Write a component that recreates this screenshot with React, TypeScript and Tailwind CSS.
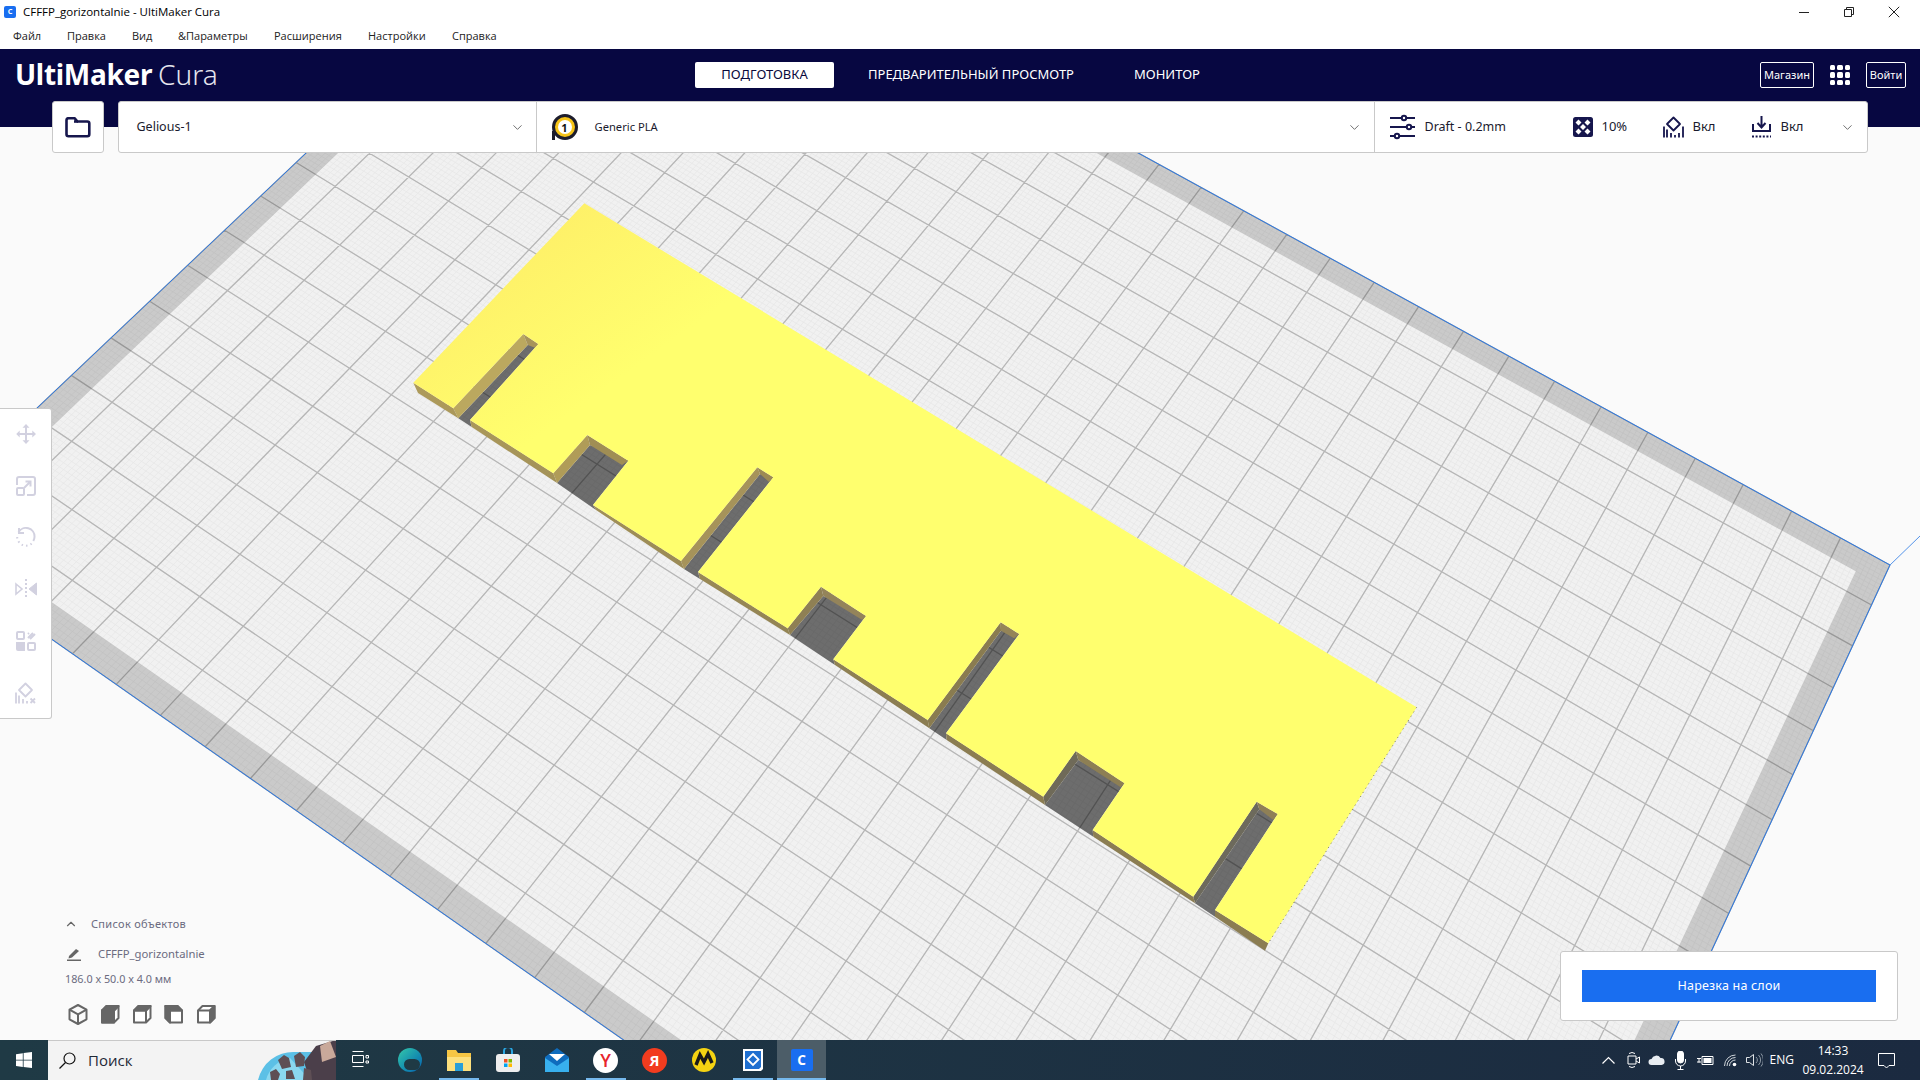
import type { ReactNode } from 'react'
import { ChevronDown, ChevronUp } from 'lucide-react'

const MENU = ['Файл', 'Правка', 'Вид', '&Параметры', 'Расширения', 'Настройки', 'Справка']
const MENU_GAPS = ['w-[54px]', 'w-[65px]', 'w-[46px]', 'w-[96px]', 'w-[94px]', 'w-[84px]', 'w-[60px]']

// build plate: homography from plate mm to screen px
const PLATE_W = 300
const PLATE_D = 200

function project(x: number, y: number): [number, number] {
  const u = x / PLATE_W
  const v = y / PLATE_D
  const w = 1 - 0.1434 * u - 0.1987 * v
  return [(1008 * u - 688.7 * v + 611) / w, (620 * u + 564.7 * v - 136) / w]
}

function pt(x: number, y: number) {
  const [a, b] = project(x, y)
  return `${a.toFixed(1)} ${b.toFixed(1)}`
}

function gridPath(step: number) {
  let d = ''
  for (let x = 0; x <= PLATE_W; x += step) d += `M${pt(x, 0)}L${pt(x, PLATE_D)}`
  for (let y = 0; y <= PLATE_D; y += step) d += `M${pt(0, y)}L${pt(PLATE_W, y)}`
  return d
}

const outline = `M${pt(0, 0)}L${pt(PLATE_W, 0)}L${pt(PLATE_W, PLATE_D)}L${pt(0, PLATE_D)}Z`
const inner = `M${pt(5, 5)}L${pt(PLATE_W - 5, 5)}L${pt(PLATE_W - 5, PLATE_D - 5)}L${pt(5, PLATE_D - 5)}Z`

type P = [number, number]
interface Notch {
  bl: P
  top: P
  right: P
  br: P
  innerTop: P
  innerRight: P
  floorBl: P
  baseBr: P
  left: string
  far: string
}

const NOTCHES: Notch[] = [
  { bl: [453.3, 408.3], top: [523.3, 334], right: [538.3, 344], br: [470, 420], innerTop: [527.7, 345], innerRight: [535, 347.7], floorBl: [458.3, 418.3], baseBr: [471.7, 427], left: '#bba85f', far: '#a8945a' },
  { bl: [553.3, 473.3], top: [587.3, 435], right: [628.3, 460.7], br: [593, 505], innerTop: [590, 445], innerRight: [622, 465], floorBl: [557, 483], baseBr: [596, 510], left: '#b09c58', far: '#a08e54' },
  { bl: [681, 561], top: [757.3, 467.3], right: [773.3, 477.3], br: [698, 572], innerTop: [760, 474], innerRight: [769, 482], floorBl: [684, 569], baseBr: [700, 579], left: '#a6935a', far: '#9c8b54' },
  { bl: [787.7, 628.3], top: [821, 586.7], right: [866, 616], br: [833.3, 659.3], innerTop: [823.3, 596], innerRight: [862.3, 620], floorBl: [790, 635], baseBr: [835, 665], left: '#8f8054', far: '#94845a' },
  { bl: [927.7, 720], top: [1000.7, 622.3], right: [1019.3, 634], br: [946, 733.3], innerTop: [1001, 630.7], innerRight: [1014, 638.3], floorBl: [929.3, 728.3], baseBr: [946.7, 740], left: '#8a7c50', far: '#958558' },
  { bl: [1043.3, 796.7], top: [1075.7, 751], right: [1124.5, 783.3], br: [1092.7, 830], innerTop: [1078.3, 760], innerRight: [1120.7, 787.3], floorBl: [1045, 805], baseBr: [1093.3, 836.7], left: '#6f6a58', far: '#8d7f54' },
  { bl: [1193.3, 896.7], top: [1256.7, 801.7], right: [1277.7, 814], br: [1215, 910], innerTop: [1259.3, 809.3], innerRight: [1273.3, 820], floorBl: [1195, 903.3], baseBr: [1215, 916.7], left: '#6d6a5c', far: '#8f8056' },
]

const poly = (...ps: P[]) => ps.map((p) => p.join(',')).join(' ')

const TOP_FACE = (() => {
  const ps: P[] = [[584.3, 203.3], [1416.7, 707.3], [1268.3, 943.3]]
  for (let i = NOTCHES.length - 1; i >= 0; i--) {
    const n = NOTCHES[i]
    ps.push(n.br, n.right, n.top, n.bl)
  }
  ps.push([413.3, 382.7])
  return poly(...ps)
})()

function sideSegments() {
  const out: string[] = []
  let start: P = [413.3, 382.7]
  let startBase: P = [418, 393]
  NOTCHES.forEach((n) => {
    out.push(poly(start, n.bl, n.floorBl, startBase))
    start = n.br
    startBase = n.baseBr
  })
  out.push(poly(start, [1268.3, 943.3], [1265, 950.7], startBase))
  return out
}

function BuildPlate() {
  const [cx, cy] = project(PLATE_W, 0)
  return (
    <svg className="absolute inset-0 h-full w-full" viewBox="0 127 1920 913" preserveAspectRatio="none">
      <defs>
        <linearGradient id="top-face" gradientUnits="userSpaceOnUse" x1="560" y1="210" x2="660" y2="350">
          <stop offset="0" stopColor="#fef068" />
          <stop offset="1" stopColor="#ffff6e" />
        </linearGradient>
        <linearGradient id="side-face" gradientUnits="userSpaceOnUse" x1="413" y1="383" x2="900" y2="700">
          <stop offset="0" stopColor="#ae9b5b" />
          <stop offset="1" stopColor="#8b7d52" />
        </linearGradient>
      </defs>
      <path d={outline} fill="#f1f1f1" />
      <path d={gridPath(1)} fill="none" stroke="#e7e7e7" strokeWidth="0.8" />
      <path d={gridPath(10)} fill="none" stroke="#b6b6b6" strokeWidth="1.3" />
      <path d={outline + inner} fill="#000" fillOpacity="0.16" fillRule="evenodd" />
      <path d={outline} fill="none" stroke="#2a78e4" strokeWidth="1" />
      <line x1={cx} y1={cy} x2="1920" y2="536" stroke="#2a78e4" strokeWidth="0.8" />

      {NOTCHES.map((n, i) => (
        <polygon key={i} points={poly(n.innerTop, n.right, n.br, n.baseBr, n.floorBl)} fill="#000" fillOpacity="0.55" />
      ))}
      {NOTCHES.map((n, i) => (
        <g key={i}>
          <polygon points={poly(n.bl, n.top, n.innerTop, n.floorBl)} fill={n.left} />
          <polygon points={poly(n.top, n.right, n.innerRight, n.innerTop)} fill={n.far} />
        </g>
      ))}
      {sideSegments().map((s, i) => (
        <polygon key={i} points={s} fill="url(#side-face)" />
      ))}
      <polygon points={TOP_FACE} fill="url(#top-face)" />
      <line x1="1416.7" y1="707.3" x2="1268.3" y2="943.3" stroke="#555" strokeWidth="0.8" strokeDasharray="1 4" />
    </svg>
  )
}

function WindowControls() {
  return (
    <div className="flex items-center text-[#222]">
      <div className="mr-[6px] flex w-[45px] justify-center">
        <div className="h-px w-[10px] bg-[#222]" />
      </div>
      <svg className="mx-[11px] h-[12px] w-[12px]" viewBox="0 0 12 12" fill="none" stroke="#222">
        <path d="M1.5 3.5h7v7h-7zM3.5 3.5v-2h7v7h-2" />
      </svg>
      <svg className="ml-[22px] mr-[20px] h-[12px] w-[12px]" viewBox="0 0 12 12" fill="none" stroke="#222">
        <path d="M.8.8l10.4 10.4M11.2.8L.8 11.2" />
      </svg>
    </div>
  )
}

function CuraMark({ size }: { size: number }) {
  return (
    <div
      className="flex items-center justify-center rounded-[2px] bg-[#196ef0] text-white"
      style={{ width: size, height: size, fontSize: size * 0.62 }}
    >
      <span className="font-bold leading-none">C</span>
    </div>
  )
}

function FolderIcon() {
  return (
    <svg width="26" height="21" viewBox="0 0 26 21" fill="none" stroke="#16164d" strokeWidth="2.6" strokeLinejoin="round">
      <path d="M1.5 3.2a2 2 0 0 1 2-2h6l3 3.3h9.8a2 2 0 0 1 2 2v10.8a2 2 0 0 1-2 2h-18.800a2 2 0 0 1-2-2z" />
      <path d="M9 4.500h4" />
    </svg>
  )
}

function SpoolIcon() {
  return (
    <div className="relative flex h-[26px] w-[26px] items-center justify-center rounded-full border-[3px] border-[#1d1d2c] bg-[#f6c419]">
      <div className="flex h-[14px] w-[14px] items-center justify-center rounded-full bg-white text-[11px] font-bold leading-none text-[#111]">
        1
      </div>
      <div className="absolute -bottom-[3px] -left-[3px] h-[9px] w-[3px] bg-[#1d1d2c]" />
    </div>
  )
}

function SlidersIcon() {
  return (
    <svg width="27" height="26" viewBox="0 0 27 26" fill="none" stroke="#16164d" strokeWidth="2">
      <path d="M1 4h12M17 4h9M1 13h17M22 13h4M1 22h5M10 22h16" />
      <circle cx="15" cy="4" r="2.200" />
      <circle cx="20" cy="13" r="2.200" />
      <circle cx="8" cy="22" r="2.200" />
    </svg>
  )
}

function InfillIcon() {
  return (
    <svg width="20" height="20" viewBox="0 0 20 20">
      <rect width="20" height="20" rx="2.500" fill="#16164d" />
      <path d="M5.500 2.500l3 3-3 3-3-3zM14.500 2.500l3 3-3 3-3-3zM10 7l3 3-3 3-3-3zM5.500 11.500l3 3-3 3-3-3zM14.500 11.500l3 3-3 3-3-3z" fill="#fff" />
    </svg>
  )
}

function SupportIcon({ color = '#16164d', x = false }: { color?: string; x?: boolean }) {
  return (
    <svg width="21" height="22" viewBox="0 0 21 22" fill="none" stroke={color} strokeWidth="1.800">
      <path d="M10.500 1.500l6.500 6.500-6.500 6.500-6.500-6.500z" strokeLinejoin="round" />
      <path d="M1 10.500v11M4 13.500v8M8 17v4.500M12 19v2.500" />
      {x ? <path d="M15.500 16.500l4.500 4.500M20 16.500l-4.500 4.500" /> : <path d="M16 17v4.500M20 10.500v11" />}
    </svg>
  )
}

function AdhesionIcon() {
  return (
    <svg width="21" height="22" viewBox="0 0 21 22" fill="none" stroke="#16164d" strokeWidth="2">
      <path d="M10.500 0v11M6.500 7l4 4.500 4-4.500" />
      <path d="M2 8v7h17v-7" />
      <path d="M1 20.500h19" strokeDasharray="2 1.600" />
    </svg>
  )
}

function MoveIcon() {
  return (
    <svg width="20" height="20" viewBox="0 0 20 20" fill="#d2d1e0">
      <path d="M10 0l3.500 3.700h-2.500v5.300h5.300v-2.500l3.700 3.500-3.700 3.500v-2.500h-5.300v5.300h2.500l-3.500 3.700-3.500-3.700h2.500v-5.300h-5.300v2.500l-3.500-3.500 3.500-3.500v2.500h5.300v-5.300h-2.500z" />
    </svg>
  )
}

function ScaleIcon() {
  return (
    <svg width="20" height="20" viewBox="0 0 20 20" fill="none" stroke="#d2d1e0" strokeWidth="2">
      <path d="M1 9v-6a2 2 0 0 1 2-2h14a2 2 0 0 1 2 2v14a2 2 0 0 1-2 2h-6" />
      <rect x="1" y="12" width="7" height="7" rx="1" />
      <path d="M8 12l6.500-6.500M9.500 5.500h5v5" />
    </svg>
  )
}

function RotateIcon() {
  return (
    <svg width="20" height="20" viewBox="0 0 20 20" fill="none" stroke="#d2d1e0" strokeWidth="2">
      <path d="M2.500 5.500a8.500 8.500 0 0 1 16 4.500 8 8 0 0 1-1.200 4" />
      <path d="M3 1v5h5" />
      <path d="M1.200 10a8.800 8.800 0 0 0 14.800 6.300" strokeDasharray="1.500 3" />
    </svg>
  )
}

function MirrorIcon() {
  return (
    <svg width="22" height="20" viewBox="0 0 22 20" fill="none" stroke="#d2d1e0">
      <path d="M1 5l6 5-6 5z" strokeWidth="1.600" />
      <path d="M21.500 4l-7.500 6 7.500 6z" fill="#d2d1e0" />
      <path d="M11 0v20" strokeWidth="2" strokeDasharray="2 2" />
    </svg>
  )
}

function PerModelIcon() {
  return (
    <svg width="20" height="20" viewBox="0 0 20 20" fill="none" stroke="#d2d1e0" strokeWidth="2">
      <rect x="1" y="1" width="7" height="7" rx="1" />
      <path d="M12 7l5-5M14 8l5-5M12 3l1-1" />
      <path d="M0 11h9v9h-7a2 2 0 0 1-2-2z" fill="#d2d1e0" stroke="none" />
      <rect x="12" y="12" width="7" height="7" rx="1" />
    </svg>
  )
}

const SIDE_TOOLS = [MoveIcon, ScaleIcon, RotateIcon, MirrorIcon, PerModelIcon]

// view cube, faces listed are the ones filled in
function CubeIcon({ faces }: { faces: ('top' | 'front' | 'side' | 'left')[] }) {
  const mirrored = faces.includes('left')
  return (
    <svg width="20" height="20" viewBox="0 0 20 20" stroke="#666" strokeWidth="2" strokeLinejoin="round" fill="none">
      <g transform={mirrored ? 'translate(20 0) scale(-1 1)' : undefined}>
        <path d="M2 6.500l4.500-4.500h12v12l-4.500 4.500h-12z" fill="#fff" />
        {faces.includes('top') && <path d="M2 6.500l4.500-4.500h12l-4.500 4.500z" fill="#666" />}
        {faces.includes('front') && <path d="M2 6.500h12v12h-12z" fill="#666" />}
        {(faces.includes('side') || mirrored) && <path d="M14 6.500l4.500-4.500v12l-4.500 4.500z" fill="#666" />}
        <path d="M2 6.500h12v12M14 6.500l4.500-4.500" />
      </g>
    </svg>
  )
}

function IsoCube() {
  return (
    <svg width="20" height="21" viewBox="0 0 20 21" fill="none" stroke="#666" strokeWidth="2" strokeLinejoin="round">
      <path d="M10 1l8.500 4.700v9.600l-8.500 4.700-8.500-4.700v-9.600z" />
      <path d="M1.500 5.700l8.500 4.700 8.500-4.700M10 10.400v9.600" />
    </svg>
  )
}

function SearchGlobe() {
  return (
    <svg className="absolute bottom-0 right-0" width="78" height="40" viewBox="0 0 78 40">
      <path d="M0 40a36 36 0 0 1 36-28h42v28z" fill="#5cc0e6" />
      <path d="M8 40a30 30 0 0 1 24-22l20 22z" fill="#8ad8f0" />
      <path d="M58 6l20-6v40h-26l-6-18 6-8z" fill="#4b3f4a" />
      <path d="M62 6l10-5 6 16-14 5z" fill="#c9a99a" />
      <path d="M20 20l6-5 5 3 2 9-9 2zM36 16l6-4 5 5-1 9-8 1zM12 32l6-3 4 5-2 6h-7zM28 31l6-1 3 9h-9zM46 28l7 2 1 10h-9z" fill="#5e4f55" />
    </svg>
  )
}

function Task({ children, underline, active }: { children: ReactNode; underline?: boolean; active?: boolean }) {
  return (
    <div className={`relative flex h-10 w-[49px] items-center justify-center ${active ? 'bg-[#4c5d68]' : ''}`}>
      {children}
      {underline && <div className={`absolute bottom-0 h-[2px] bg-[#76b9ed] ${active ? 'w-full' : 'w-[40px]'}`} />}
    </div>
  )
}

function Taskbar() {
  return (
    <footer className="flex h-10 shrink-0 items-center bg-gradient-to-r from-[#1f3a45] to-[#1b2a40] font-['Open_Sans',sans-serif] text-white">
      <div className="flex h-10 w-[48px] items-center justify-center">
        <svg width="16" height="16" viewBox="0 0 16 16" fill="#fff">
          <path d="M0 2.200l6.800-1v6.500h-6.800zM7.600 1.100l8.400-1.100v7.700h-8.400zM0 8.400h6.800v6.500l-6.800-1zM7.600 8.400h8.400v7.600l-8.400-1.100z" />
        </svg>
      </div>
      <div className="relative flex h-10 w-[288px] items-center overflow-hidden border-t border-[#c8c8c8] bg-[#f3f3f3] pl-[11px] text-[#1f2937]">
        <svg width="17" height="17" viewBox="0 0 17 17" fill="none" stroke="#111" strokeWidth="1.200">
          <circle cx="10.500" cy="6.500" r="5.500" />
          <path d="M6.500 10.500l-6 6" />
        </svg>
        <span className="ml-[12px] text-[15px]">Поиск</span>
        <SearchGlobe />
      </div>
      <Task>
        <svg width="17" height="20" viewBox="0 0 17 20" fill="none" stroke="#fff">
          <path d="M.5 1.500h11M.5 5.500h11v7h-11zM.5 16.500h11M14 5.500h2.500v2.500h-2.500zM14 11h2.500v2h-2.500z" />
        </svg>
      </Task>
      <Task>
        <div className="relative h-6 w-6 rounded-full bg-gradient-to-br from-[#36c8a8] to-[#0f5fae]">
          <div className="absolute bottom-[2px] left-[6px] h-[11px] w-[16px] rounded-full bg-[#1f3a45]" />
        </div>
      </Task>
      <Task underline>
        <svg width="24" height="22" viewBox="0 0 24 22">
          <path d="M0 1h9l2 3h13v18h-24z" fill="#f6c644" />
          <path d="M0 8h24v14h-24z" fill="#fde07d" />
          <path d="M8 14h8v8h-8z" fill="#2a9fd8" />
        </svg>
      </Task>
      <Task>
        <svg width="24" height="24" viewBox="0 0 24 24">
          <path d="M8 6v-3a4 4 0 0 1 8 0v3" fill="none" stroke="#2aa5e0" strokeWidth="2" />
          <rect y="6" width="24" height="18" rx="3" fill="#eeeeee" />
          <path d="M8 11h3.500v3.500h-3.500z" fill="#f25022" />
          <path d="M12.500 11h3.500v3.500h-3.500z" fill="#7fba00" />
          <path d="M8 15.500h3.500v3.500h-3.500z" fill="#00a4ef" />
          <path d="M12.500 15.500h3.500v3.500h-3.500z" fill="#ffb900" />
        </svg>
      </Task>
      <Task>
        <svg width="24" height="24" viewBox="0 0 24 24">
          <path d="M0 9l12-9 12 9v15h-24z" fill="#0f6cbd" />
          <path d="M0 10l12 8 12-8v14h-24z" fill="#38b0ee" />
          <path d="M4 6h16l-8 7z" fill="#ffffff" />
        </svg>
      </Task>
      <Task underline>
        <div className="flex h-[25px] w-[25px] items-center justify-center rounded-full bg-white text-[18px] font-semibold leading-none text-[#e8242c]">
          Y
        </div>
      </Task>
      <Task>
        <div className="flex h-[25px] w-[25px] items-center justify-center rounded-full bg-[#f23c1f] text-[15px] font-bold leading-none text-white">
          Я
        </div>
      </Task>
      <Task>
        <svg width="24" height="24" viewBox="0 0 24 24">
          <circle cx="12" cy="12" r="12" fill="#f5d312" />
          <path d="M4 17l4-10 4 7 4-8 4 9" fill="none" stroke="#1a1a1a" strokeWidth="3.400" />
        </svg>
      </Task>
      <Task underline>
        <svg width="24" height="26" viewBox="0 0 24 26">
          <path d="M2 2h20v20l-2 2h-18z" fill="#fff" />
          <path d="M4 4h16v16l-2 2h-14z" fill="#1f6fd0" />
          <path d="M12 7l5.500 5.500-5.500 5.500-5.500-5.500z" fill="none" stroke="#fff" strokeWidth="1.800" />
        </svg>
      </Task>
      <Task underline active>
        <CuraMark size={22} />
      </Task>

      <div className="ml-auto flex h-10 items-center pr-[25px]">
        <svg width="13" height="8" viewBox="0 0 13 8" fill="none" stroke="#fff" strokeWidth="1.200">
          <path d="M.5 7.500l6-6 6 6" />
        </svg>
        <svg className="ml-[12px]" width="13" height="18" viewBox="0 0 13 18" fill="none" stroke="#fff">
          <path d="M1 5h8v8h-8zM9 8l3.500-2v6l-3.500-2M2 2.500q3-2 6 0M2 15.500q3 2 6 0" />
        </svg>
        <svg className="ml-[8px]" width="17" height="10" viewBox="0 0 17 10" fill="#e8edf2">
          <path d="M3.500 10a3 3 0 0 1 0-6 5 5 0 0 1 9-1 3.500 3.500 0 0 1 1 7z" />
        </svg>
        <svg className="ml-[10px]" width="11" height="19" viewBox="0 0 11 19" fill="none" stroke="#fff">
          <rect x="2.500" y="0" width="6" height="12" rx="3" fill="#fff" />
          <path d="M.5 8v2a5 5 0 0 0 10 0v-2M5.500 15v3M2.500 18.500h6" />
        </svg>
        <svg className="ml-[11px]" width="17" height="11" viewBox="0 0 17 11" fill="none" stroke="#fff">
          <path d="M5 1.500h11v8h-11zM0 3.500h4M0 7h4M2 3.500v4" />
          <rect x="6.500" y="3" width="8" height="5" fill="#fff" stroke="none" />
        </svg>
        <svg className="ml-[10px]" width="14" height="13" viewBox="0 0 14 13" fill="none" stroke="#cfd5da">
          <path d="M.5 12a11 11 0 0 1 11-11M3 12a8.500 8.500 0 0 1 8.500-8.500M5.500 12a6 6 0 0 1 6-6" />
          <circle cx="10.500" cy="10.500" r="1.800" fill="#fff" stroke="none" />
        </svg>
        <svg className="ml-[8px]" width="17" height="14" viewBox="0 0 17 14" fill="none" stroke="#dfe3e6">
          <path d="M.5 4.500h3l4-3v11l-4-3h-3z" />
          <path d="M10 4a4 4 0 0 1 0 6M12.500 2a7 7 0 0 1 0 10M15 .5a10 10 0 0 1 0 13" stroke="#8d98a3" />
        </svg>
        <span className="ml-[7px] text-[12px]">ENG</span>
        <div className="ml-[11px] flex w-[56px] flex-col items-center text-[12px] leading-[19px]">
          <span>14:33</span>
          <span>09.02.2024</span>
        </div>
        <svg className="ml-[17px]" width="17" height="17" viewBox="0 0 17 17" fill="none" stroke="#fff">
          <path d="M.5 1.500h16v12h-5.500l-2.500 2.500-2.500-2.500h-5.500z" />
        </svg>
      </div>
    </footer>
  )
}

export default function App() {
  return (
    <div className="flex h-screen w-full flex-col overflow-hidden bg-[#fafafa] font-['Noto_Sans',sans-serif]">
      {/* window chrome */}
      <div className="flex h-[24px] shrink-0 items-center justify-between bg-white pl-[4px] font-['Open_Sans',sans-serif] text-[11.5px] text-black">
        <div className="flex items-center gap-[7px]">
          <CuraMark size={12} />
          <span>CFFFP_gorizontalnie - UltiMaker Cura</span>
        </div>
        <WindowControls />
      </div>
      <div className="flex h-[25px] shrink-0 items-center bg-white pl-[13px] font-['Open_Sans',sans-serif] text-[11px] text-[#222]">
        {MENU.map((item, i) => (
          <span key={item} className={MENU_GAPS[i]}>
            {item}
          </span>
        ))}
      </div>

      {/* top bar */}
      <header className="relative z-10 h-[78px] shrink-0 bg-[#070741]">
        <div className="flex h-[50px] items-center pr-[14px] text-white">
          <div className="-mt-[1px] w-[695px] pl-[15px] text-[28px] leading-none">
            <span className="font-bold tracking-[-0.3px]">UltiMaker</span>
            <span className="ml-[6px] font-light text-[#e5e5ee]">Cura</span>
          </div>
          <div className="mt-[2px] flex h-[26px] w-[139px] items-center justify-center rounded-[2px] bg-white text-[13px] text-[#0a0a3c]">
            ПОДГОТОВКА
          </div>
          <span className="ml-[34px] mt-[1px] text-[13px]">ПРЕДВАРИТЕЛЬНЫЙ ПРОСМОТР</span>
          <span className="ml-[60px] mt-[1px] text-[13px]">МОНИТОР</span>
          <div className="ml-auto mt-[2px] flex h-[26px] w-[54px] items-center justify-center rounded-[2px] border border-white text-[11px]">
            Магазин
          </div>
          <div className="ml-[16px] mt-[2px] grid h-[20px] w-[20px] grid-cols-3 gap-[2px]">
            {Array.from({ length: 9 }).map((_, i) => (
              <div key={i} className="rounded-[1.500px] bg-white" />
            ))}
          </div>
          <div className="ml-[16px] mt-[2px] flex h-[26px] w-[40px] items-center justify-center rounded-[2px] border border-white text-[11px]">
            Войти
          </div>
        </div>

        <div className="mt-[2px] flex h-[52px] pl-[52px] text-[12.500px] text-[#1a1a2e]">
          <div className="flex h-full w-[52px] items-center justify-center rounded-[3px] border border-[#c9c9c9] bg-white">
            <FolderIcon />
          </div>
          <div className="ml-[13.500px] flex h-full w-[1750.500px] rounded-[3px] border border-[#c9c9c9] bg-white">
            <div className="flex w-[418px] items-center justify-between border-r border-[#c9c9c9] pl-[18px] pr-[11px]">
              <span className="pt-[1px]">Gelious-1</span>
              <ChevronDown size={15} color="#666" strokeWidth={1.500} />
            </div>
            <div className="flex w-[838px] items-center border-r border-[#c9c9c9] pl-[15px] pr-[12px]">
              <SpoolIcon />
              <span className="ml-[17px] text-[11.200px]">Generic PLA</span>
              <ChevronDown className="ml-auto" size={15} color="#666" strokeWidth={1.500} />
            </div>
            <div className="flex flex-1 items-center pl-[14px] pr-[12px]">
              <SlidersIcon />
              <span className="ml-[9px] w-[148px] pt-[1px]">Draft - 0.2mm</span>
              <InfillIcon />
              <span className="ml-[9px] w-[61px] text-[13px]">10%</span>
              <SupportIcon />
              <span className="ml-[9px] w-[58px] text-[13px]">Вкл</span>
              <AdhesionIcon />
              <span className="ml-[9px] text-[13px]">Вкл</span>
              <ChevronDown className="ml-auto" size={15} color="#666" strokeWidth={1.500} />
            </div>
          </div>
        </div>
      </header>

      {/* 3d viewport */}
      <main className="relative flex-1 overflow-hidden">
        <BuildPlate />

        <div className="absolute left-0 top-[281px] flex h-[311px] w-[52px] flex-col items-center rounded-r-[3px] border border-l-0 border-[#c9c9c9] bg-white">
          {SIDE_TOOLS.map((Tool, i) => (
            <div key={i} className="-mt-[0.200px] flex h-[52px] shrink-0 items-center justify-center pb-[2px]">
              <Tool />
            </div>
          ))}
          <div className="flex h-[52px] shrink-0 items-center justify-center pb-[2px]">
            <SupportIcon color="#d2d1e0" x />
          </div>
        </div>

        <div className="absolute bottom-[15px] left-[65px] text-[11.300px] text-[#6b6b80]">
          <div className="flex h-[18px] items-center">
            <ChevronUp size={14} color="#666" className="-ml-[1px]" />
            <span className="ml-[13px] text-[11px] tracking-[0.3px]">Список объектов</span>
          </div>
          <div className="mt-[12px] flex h-[18px] items-center">
            <svg className="ml-[2px]" width="14" height="14" viewBox="0 0 14 14" fill="#666">
              <path d="M2 9l7-7 3 2-7 6.500-3.500 1z" />
              <path d="M0 12.500h14v1.500h-14z" />
            </svg>
            <span className="ml-[17px]">CFFFP_gorizontalnie</span>
          </div>
          <div className="mt-[7px] h-[18px] text-[10.800px] leading-[18px]">186.0 x 50.0 x 4.0 мм</div>
          <div className="mt-[16px] ml-[3px] flex h-[21px] gap-[12px]">
            <IsoCube />
            <CubeIcon faces={['front', 'top']} />
            <CubeIcon faces={['top']} />
            <CubeIcon faces={['left', 'top']} />
            <CubeIcon faces={['side']} />
          </div>
        </div>

        <div className="absolute bottom-[19px] right-[22px] flex h-[70px] w-[338px] items-center justify-center rounded-[3px] border border-[#c9c9c9] bg-white">
          <div className="flex h-[32px] w-[294px] items-center justify-center bg-[#196ef0] pt-[1px] text-[12.500px] tracking-[0.2px] text-white">
            Нарезка на слои
          </div>
        </div>
      </main>

      <Taskbar />
    </div>
  )
}
